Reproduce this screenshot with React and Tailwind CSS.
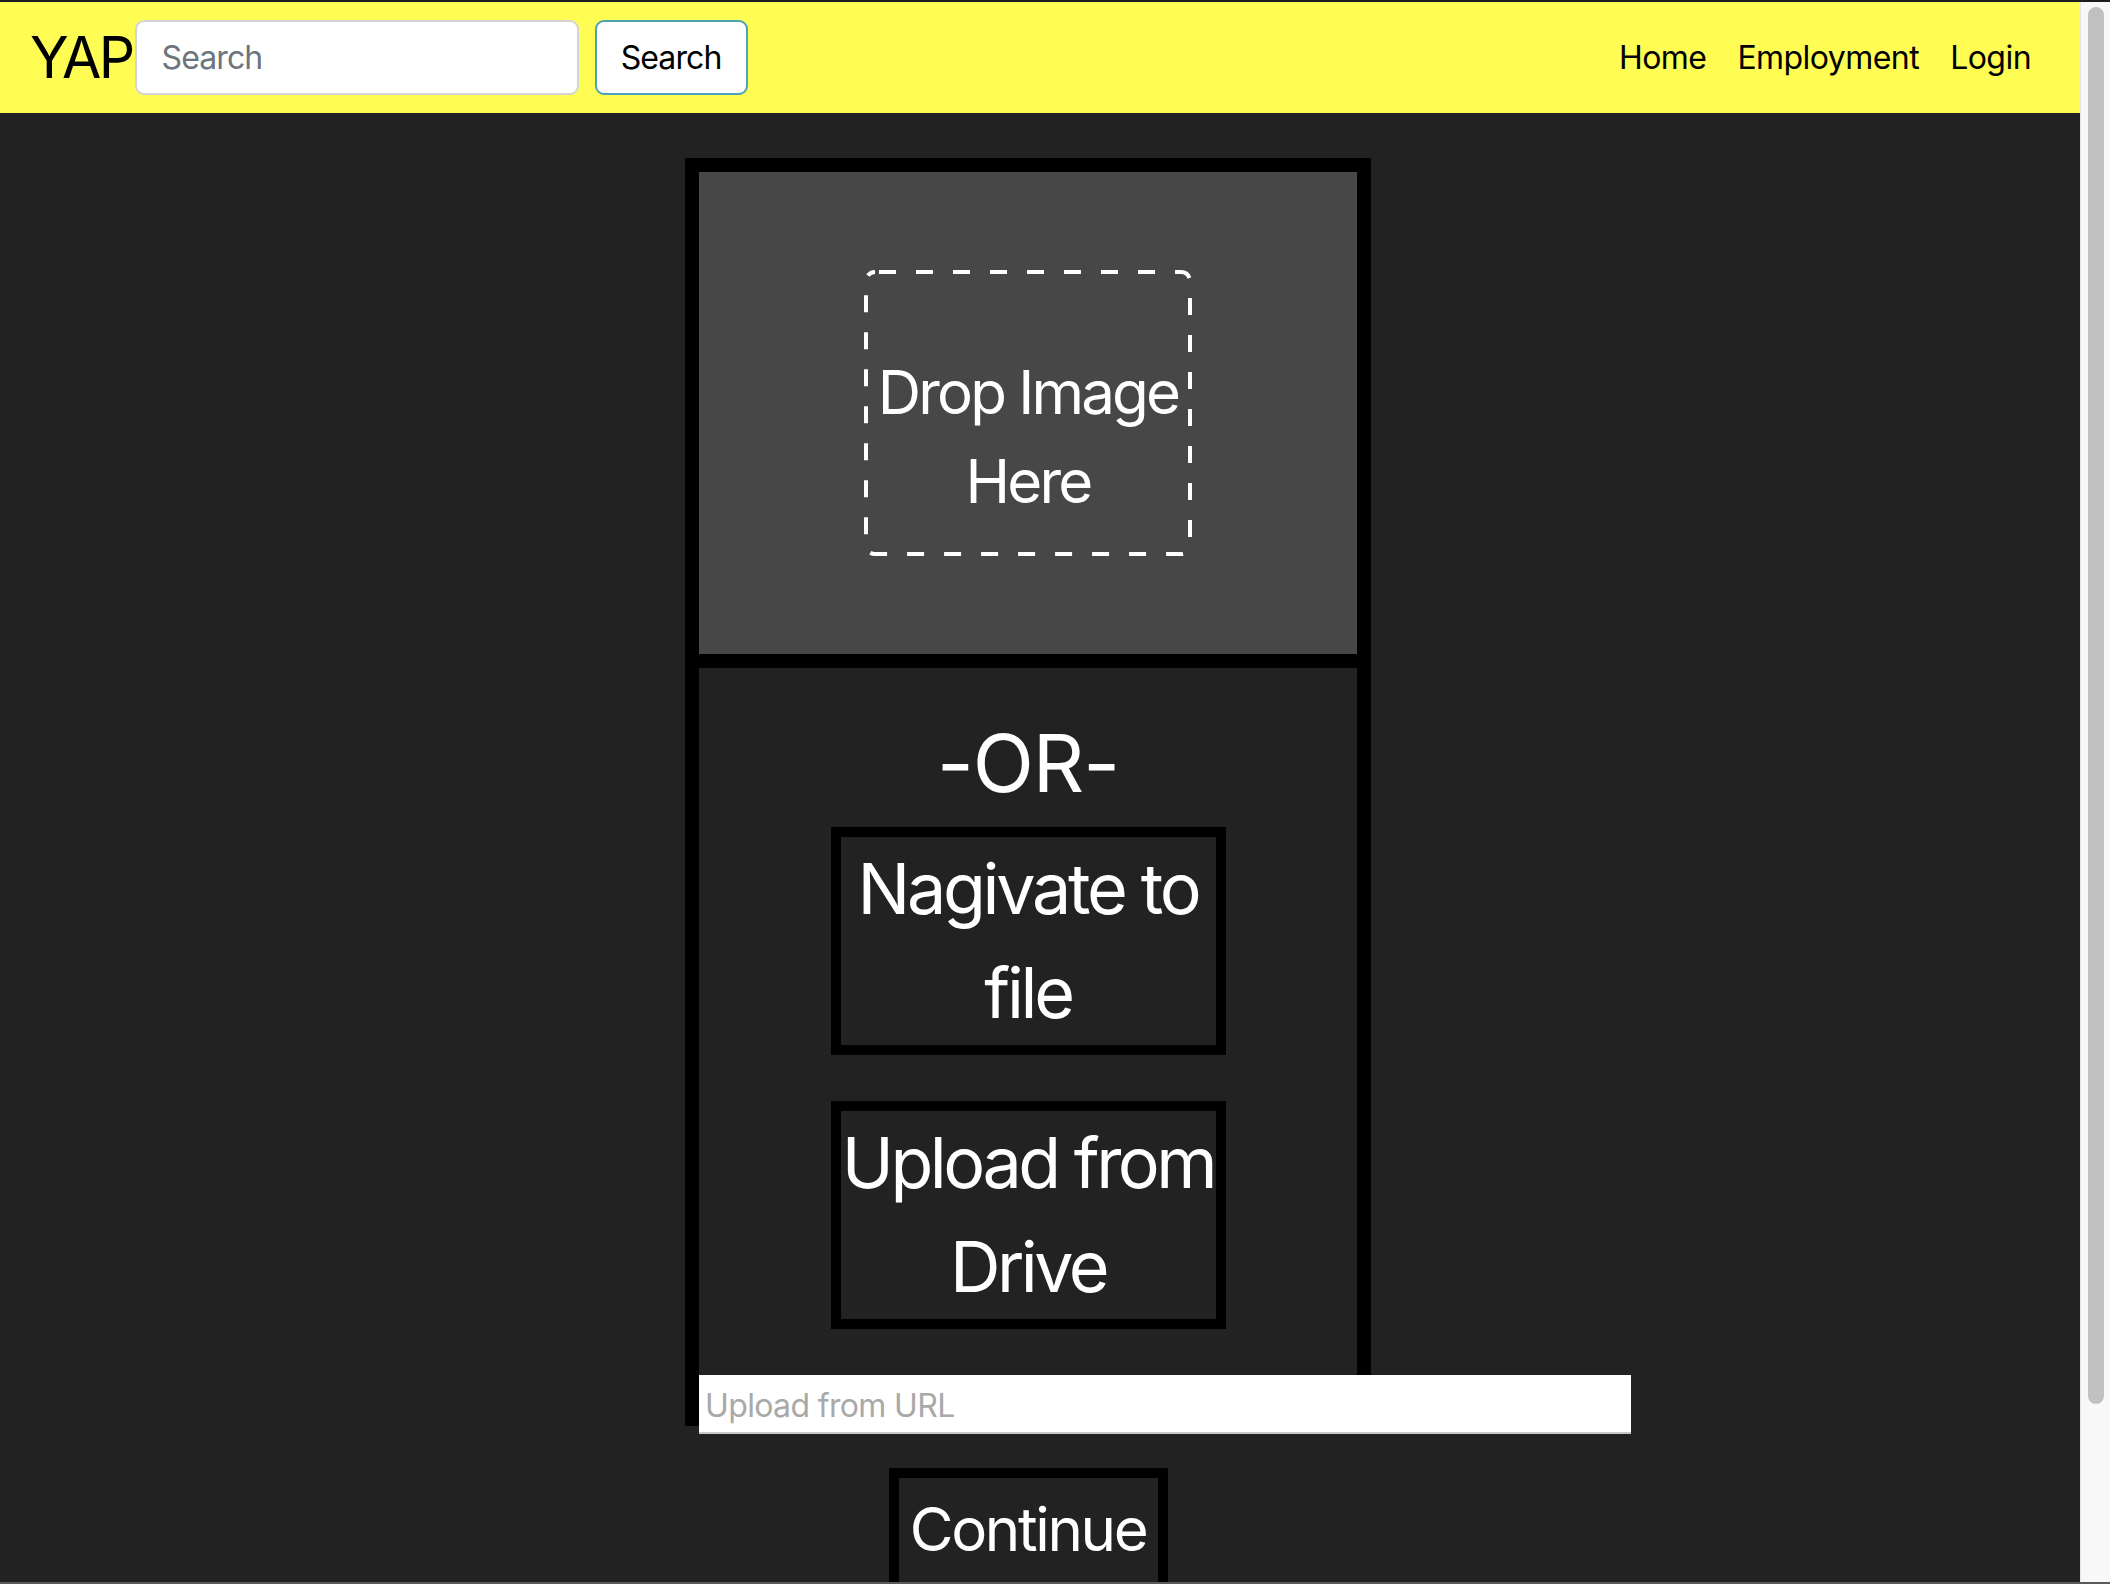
import React from "react";

function DashedOutline() {
  return (
    <svg
      className="pointer-events-none absolute inset-0"
      width="328"
      height="286"
      viewBox="0 0 328 286"
      fill="none"
    >
      <rect
        x="2"
        y="2"
        width="324"
        height="282"
        rx="9"
        stroke="#ffffff"
        strokeWidth="4"
        strokeDasharray="17 20"
        strokeDashoffset="-4"
      />
    </svg>
  );
}

export default function App() {
  return (
    <div className="flex h-screen w-full overflow-hidden border-t-2 border-b-2 border-t-[#1c1c1c] border-b-[#5a5a5a] bg-[#222222] font-['Inter','Noto_Sans',sans-serif]">
      <div className="flex min-w-0 flex-1 flex-col">
        <nav className="flex h-[111px] shrink-0 items-center bg-[#fffc54] pl-[30px] pr-[49px]">
          <span className="text-[57px] leading-none tracking-[-0.045em] text-black">YAP</span>
          <input
            className="ml-[2px] h-[75px] w-[444px] rounded-[9px] border-2 border-[#d4d4d4] bg-white px-[25px] text-[32px] tracking-[-0.028em] text-black outline-none placeholder:text-[#6c757d]"
            placeholder="Search"
          />
          <button className="ml-[16px] h-[75px] w-[153px] rounded-[9px] border-2 border-[#4aa3b9] bg-white text-[32px] tracking-[-0.028em] text-black">
            Search
          </button>
          <div className="ml-auto flex items-center gap-[31px] text-[32px] tracking-[-0.017em] text-black">
            <span>Home</span>
            <span>Employment</span>
            <span>Login</span>
          </div>
        </nav>

        <main className="flex flex-1 flex-col items-center pr-[24px] pt-[45px]">
          <div className="flex h-[1268px] w-[686px] shrink-0 flex-col border-[14px] border-black">
            <div className="flex h-[496px] shrink-0 items-center justify-center border-b-[14px] border-black bg-[#474747]">
              <div className="relative flex h-[286px] w-[328px] flex-col items-center pt-[78px] text-center text-[60px] leading-[89px] tracking-[-0.047em] text-white">
                <DashedOutline />
                <span className="whitespace-nowrap">Drop Image</span>
                <span className="whitespace-nowrap">Here</span>
              </div>
            </div>
            <div className="flex h-[707px] shrink-0 flex-col items-center bg-[#222222] pt-[47px]">
              <div className="text-[80px] leading-[96px] tracking-[-0.0125em] text-white">-OR-</div>
              <div className="mt-[16px] flex h-[228px] w-[395px] flex-col items-center justify-center border-[10px] border-black text-center text-[70px] leading-[104px] tracking-[-0.047em] text-white">
                <span className="whitespace-nowrap">Nagivate to</span>
                <span className="whitespace-nowrap">file</span>
              </div>
              <div className="mt-[46px] flex h-[228px] w-[395px] flex-col items-center justify-center border-[10px] border-black text-center text-[70px] leading-[104px] tracking-[-0.05em] text-white">
                <span className="whitespace-nowrap">Upload from</span>
                <span className="whitespace-nowrap">Drive</span>
              </div>
            </div>
            <input
              className="h-[59px] w-[932px] shrink-0 border-b-2 border-[#c8c8c8] bg-white pl-[6px] pt-[3px] text-[32px] tracking-[-0.02em] text-black outline-none placeholder:text-[#a9a9a9]"
              placeholder="Upload from URL"
            />
          </div>
          <button className="mt-[42px] flex h-[160px] w-[279px] shrink-0 items-start justify-center self-center border-[10px] border-black pt-[6px] text-[60px] leading-[90px] tracking-[-0.039em] text-white">
            Continue
          </button>
        </main>
      </div>
      <div className="w-[30px] shrink-0 border-l border-[#e4e4e4] bg-[#f8f8f8] pt-[5px]">
        <div className="ml-[7px] h-[1397px] w-[16px] rounded-full bg-[#c1c1c1]" />
      </div>
    </div>
  );
}
